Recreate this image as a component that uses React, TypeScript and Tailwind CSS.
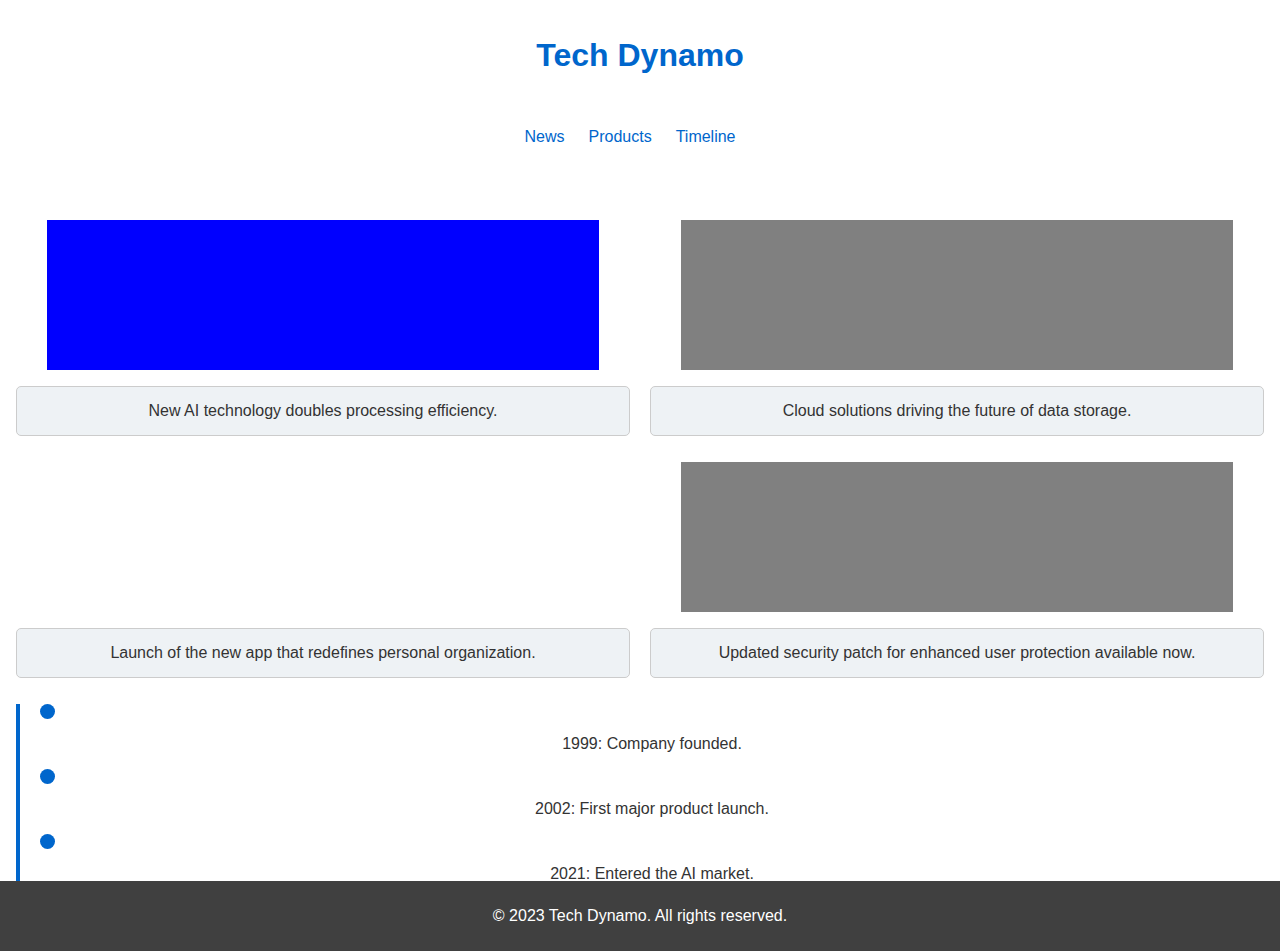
import React from "react";

const news = [
  { img: "bg-[#0000ff]", text: "New AI technology doubles processing efficiency." },
  { img: "bg-[#808080]", text: "Cloud solutions driving the future of data storage." },
  { img: "", text: "Launch of the new app that redefines personal organization." },
  { img: "bg-[#808080]", text: "Updated security patch for enhanced user protection available now." },
];

const timeline = [
  "1999: Company founded.",
  "2002: First major product launch.",
  "2021: Entered the AI market.",
];

export default function App() {
  return (
    <div className="min-h-[951px] bg-white text-[#333] font-['Liberation_Sans',Arial,sans-serif] text-base">
      <header className="pt-[35px] text-center">
        <h1 className="text-[32px] leading-[40px] font-bold text-[#0066cc]">Tech Dynamo</h1>
        <nav className="mt-[52px] flex justify-center gap-[24px] pr-[20px] leading-[20px]">
          <a className="text-[#0066cc]">News</a>
          <a className="text-[#0066cc]">Products</a>
          <a className="text-[#0066cc]">Timeline</a>
        </nav>
      </header>
      <main className="px-4 pt-[73px]">
        <section className="grid grid-cols-2 gap-x-5 gap-y-[26px]">
          {news.map((n, i) => (
            <div key={i} className="flex flex-col">
              <div className={`mx-auto h-[150px] w-[552px] ${n.img}`} />
              <div className="mt-4 flex h-[50px] items-center justify-center rounded-[5px] border border-[#cccccc] bg-[#eef2f5] text-[#333]">
                {n.text}
              </div>
            </div>
          ))}
        </section>
        <section className="mt-[26px] border-l-4 border-[#0066cc] pl-5 pb-[40px]">
          {timeline.map((t, i) => (
            <div key={i} className="pb-[13px]">
              <div className="h-[15px] w-[15px] rounded-full bg-[#0066cc]" />
              <p className="mt-[13px] text-center leading-[24px] text-[#333]">{t}</p>
            </div>
          ))}
        </section>
      </main>
      <footer className="fixed bottom-0 left-0 right-0 flex h-[70px] items-center justify-center bg-[#404040] text-white">
        © 2023 Tech Dynamo. All rights reserved.
      </footer>
    </div>
  );
}
